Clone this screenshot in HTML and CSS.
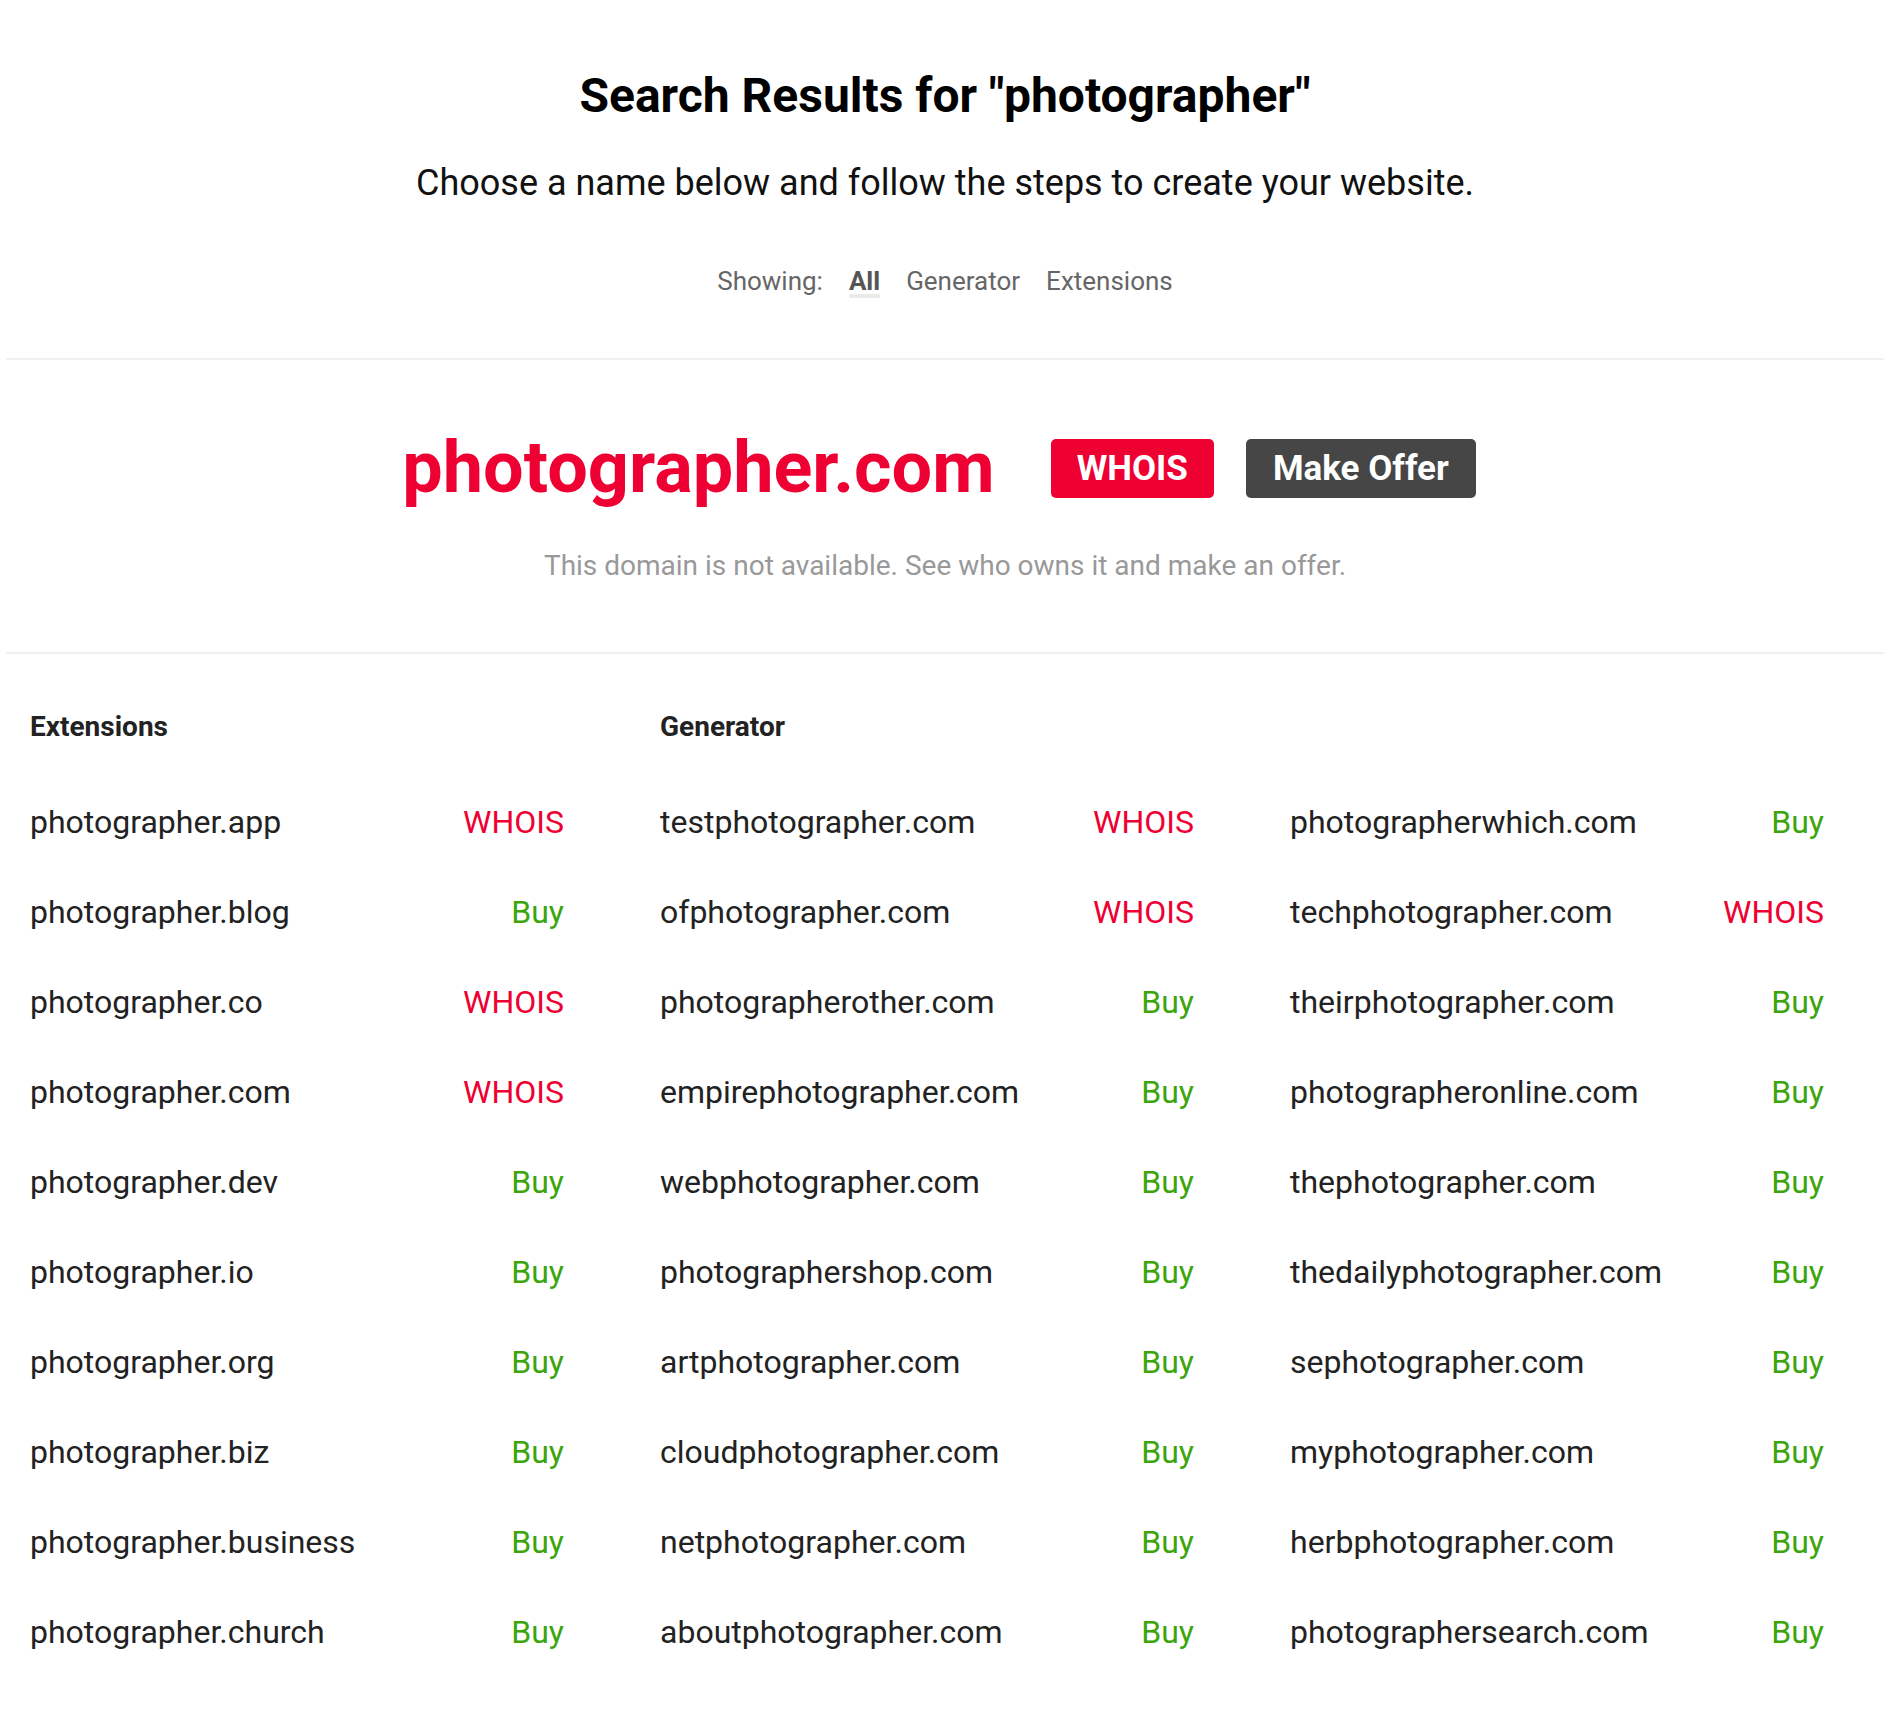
FILE: index.html
```html
<!DOCTYPE html>
<html lang="en">
<head>
<meta charset="utf-8">
<title>Search Results</title>
<link rel="stylesheet" href="styles.css">
</head>
<body>
<header class="intro">
  <h1 class="title">Search Results for "photographer"</h1>
  <p class="subtitle">Choose a name below and follow the steps to create your website.</p>
  <nav class="filter">
    <span class="filter-label">Showing:</span>
    <a class="filter-item active">All</a>
    <a class="filter-item">Generator</a>
    <a class="filter-item">Extensions</a>
  </nav>
</header>
<hr class="divider divider-top">
<section class="featured">
  <div class="featured-row">
    <span class="featured-name">photographer.com</span>
    <a class="btn btn-red">WHOIS</a>
    <a class="btn btn-dark">Make Offer</a>
  </div>
  <p class="featured-note">This domain is not available. See who owns it and make an offer.</p>
</section>
<hr class="divider">
<section class="results">
  <div class="group">
    <h3 class="group-title">Extensions</h3>
    <ul class="list list-one">
      <li class="item"><span class="name">photographer.app</span><a class="act whois">WHOIS</a></li>
      <li class="item"><span class="name">photographer.blog</span><a class="act buy">Buy</a></li>
      <li class="item"><span class="name">photographer.co</span><a class="act whois">WHOIS</a></li>
      <li class="item"><span class="name">photographer.com</span><a class="act whois">WHOIS</a></li>
      <li class="item"><span class="name">photographer.dev</span><a class="act buy">Buy</a></li>
      <li class="item"><span class="name">photographer.io</span><a class="act buy">Buy</a></li>
      <li class="item"><span class="name">photographer.org</span><a class="act buy">Buy</a></li>
      <li class="item"><span class="name">photographer.biz</span><a class="act buy">Buy</a></li>
      <li class="item"><span class="name">photographer.business</span><a class="act buy">Buy</a></li>
      <li class="item"><span class="name">photographer.church</span><a class="act buy">Buy</a></li>
    </ul>
  </div>
  <div class="group group-wide">
    <h3 class="group-title">Generator</h3>
    <ul class="list list-two">
      <li class="item"><span class="name">testphotographer.com</span><a class="act whois">WHOIS</a></li>
      <li class="item"><span class="name">ofphotographer.com</span><a class="act whois">WHOIS</a></li>
      <li class="item"><span class="name">photographerother.com</span><a class="act buy">Buy</a></li>
      <li class="item"><span class="name">empirephotographer.com</span><a class="act buy">Buy</a></li>
      <li class="item"><span class="name">webphotographer.com</span><a class="act buy">Buy</a></li>
      <li class="item"><span class="name">photographershop.com</span><a class="act buy">Buy</a></li>
      <li class="item"><span class="name">artphotographer.com</span><a class="act buy">Buy</a></li>
      <li class="item"><span class="name">cloudphotographer.com</span><a class="act buy">Buy</a></li>
      <li class="item"><span class="name">netphotographer.com</span><a class="act buy">Buy</a></li>
      <li class="item"><span class="name">aboutphotographer.com</span><a class="act buy">Buy</a></li>
      <li class="item"><span class="name">photographerwhich.com</span><a class="act buy">Buy</a></li>
      <li class="item"><span class="name">techphotographer.com</span><a class="act whois">WHOIS</a></li>
      <li class="item"><span class="name">theirphotographer.com</span><a class="act buy">Buy</a></li>
      <li class="item"><span class="name">photographeronline.com</span><a class="act buy">Buy</a></li>
      <li class="item"><span class="name">thephotographer.com</span><a class="act buy">Buy</a></li>
      <li class="item"><span class="name">thedailyphotographer.com</span><a class="act buy">Buy</a></li>
      <li class="item"><span class="name">sephotographer.com</span><a class="act buy">Buy</a></li>
      <li class="item"><span class="name">myphotographer.com</span><a class="act buy">Buy</a></li>
      <li class="item"><span class="name">herbphotographer.com</span><a class="act buy">Buy</a></li>
      <li class="item"><span class="name">photographersearch.com</span><a class="act buy">Buy</a></li>
    </ul>
  </div>
</section>
</body>
</html>
```
FILE: styles.css
```css
* { box-sizing: border-box; }
html, body { margin: 0; padding: 0; background: #fff; }
body {
  font-family: Roboto, "Liberation Sans", Arial, sans-serif;
  color: #222;
}
.intro {
  text-align: center;
  padding-top: 68px;
}
.title {
  margin: 0;
  font-size: 48px;
  line-height: 56px;
  font-weight: 700;
  color: #000;
}
.subtitle {
  margin: 38px 0 0;
  font-size: 36px;
  line-height: 42px;
  color: #111;
}
.filter {
  display: flex;
  justify-content: center;
  align-items: flex-start;
  gap: 26px;
  margin-top: 64px;
  font-size: 26px;
  line-height: 26px;
  color: #666;
}
.filter-item { color: #666; text-decoration: none; }
.filter-item.active {
  font-weight: 700;
  color: #555;
  border-bottom: 4px solid #ebebeb;
}
.divider {
  border: 0;
  border-top: 2px solid #f0f0f0;
  margin: 0 6px;
  height: 0;
}
.divider-top { margin-top: 60px; }
.featured {
  text-align: center;
  padding-top: 65px;
  padding-bottom: 70px;
}
.featured-row {
  display: flex;
  justify-content: center;
  align-items: center;
  gap: 32px;
  padding-right: 12px;
}
.featured-name {
  font-size: 72px;
  line-height: 86px;
  font-weight: 700;
  color: #ee0033;
  margin-right: 24px;
}
.btn {
  display: inline-flex;
  align-items: center;
  height: 59px;
  padding: 0 26px;
  border-radius: 5px;
  font-size: 35px;
  font-weight: 700;
  color: #fff;
}
.btn-red { background: #ee0033; }
.btn-dark { background: #464646; padding: 0 27px; }
.featured-note {
  margin: 38px 0 0;
  font-size: 28px;
  line-height: 33px;
  color: #999;
}
.results {
  display: grid;
  grid-template-columns: 1fr 2fr;
  padding-top: 56px;
  padding-bottom: 39px;
}
.group-title {
  margin: 0;
  padding-left: 30px;
  font-size: 28px;
  line-height: 33px;
  font-weight: 700;
  color: #222;
}
.list {
  list-style: none;
  margin: 34px 0 0;
  padding: 0;
}
.list-two {
  display: grid;
  grid-template-columns: 1fr 1fr;
  grid-template-rows: repeat(10, 90px);
  grid-auto-flow: column;
}
.item {
  display: flex;
  justify-content: space-between;
  align-items: center;
  height: 90px;
  padding: 0 66px 0 30px;
  font-size: 32px;
}
.name { color: #222; }
.act { text-decoration: none; }
.whois { color: #ee0033; }
.buy { color: #3ba50b; }
```
